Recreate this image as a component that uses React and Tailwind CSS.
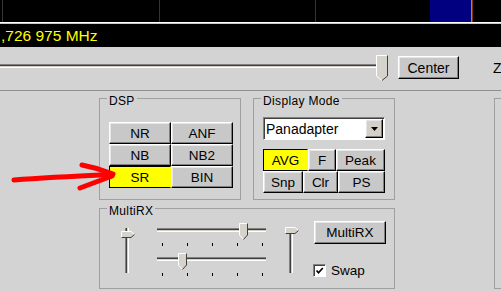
const raised =
  'bg-[#c8c8c8] border border-t-white border-l-white border-r-black border-b-black shadow-[inset_-1px_-1px_0_#808080,inset_1px_1px_0_#e6e6e6]'
const pressed = 'bg-[#ffff00] border border-black border-r-[#ffff00]'
const sunken =
  'border border-t-[#808080] border-l-[#808080] border-r-white border-b-white shadow-[inset_1px_1px_0_#404040]'

function Btn({ on, className = '', children }) {
  return (
    <div className={`flex items-center justify-center text-[13.5px] leading-[15px] ${on ? pressed : raised} ${className}`}>
      {children}
    </div>
  )
}

function GroupBox({ label, className = '', children }) {
  return (
    <div className={`relative shrink-0 border border-[#a0a0a0] ${className}`}>
      {label && (
        <span className="absolute left-[7px] top-[-5px] px-[2px] bg-[#d3d3d3] text-[12px] leading-[14px] tracking-[0.35px] whitespace-nowrap">
          {label}
        </span>
      )}
      {children}
    </div>
  )
}

// trackbar pieces (drawn)
function HTrack({ x, y, w }) {
  return (
    <g>
      <rect x={x} y={y} width={w} height="1" fill="#808080" />
      <rect x={x} y={y + 1} width={w} height="1" fill="#404040" />
      <rect x={x} y={y + 2} width={w} height="1" fill="#d4d0c8" />
      <rect x={x} y={y + 3} width={w} height="1" fill="#ffffff" />
    </g>
  )
}

function VTrack({ x, y, h }) {
  return (
    <g>
      <rect x={x} y={y} width="1" height={h} fill="#808080" />
      <rect x={x + 1} y={y} width="1" height={h} fill="#404040" />
      <rect x={x + 2} y={y} width="1" height={h} fill="#d4d0c8" />
      <rect x={x + 3} y={y} width="1" height={h} fill="#ffffff" />
    </g>
  )
}

function DownThumb({ x, y, w = 9, h = 17 }) {
  const m = x + w / 2
  const b = y + h - 5
  return (
    <g>
      <polygon points={`${x},${y} ${x + w},${y} ${x + w},${b} ${m},${y + h} ${x},${b}`} fill="#d6d3cc" />
      <polyline points={`${x + 0.5},${b} ${x + 0.5},${y + 0.5} ${x + w - 0.5},${y + 0.5}`} fill="none" stroke="#ffffff" />
      <polyline points={`${x + 0.5},${b} ${m},${y + h - 0.5}`} fill="none" stroke="#ffffff" />
      <polyline points={`${x + w - 0.5},${y + 0.5} ${x + w - 0.5},${b} ${m},${y + h - 0.5}`} fill="none" stroke="#404040" />
    </g>
  )
}

function RightThumb({ x, y }) {
  return (
    <g>
      <polygon points={`${x},${y} ${x + 10},${y} ${x + 14},${y + 3.5} ${x + 10},${y + 7} ${x},${y + 7}`} fill="#d6d3cc" />
      <polyline points={`${x + 0.5},${y + 7} ${x + 0.5},${y + 0.5} ${x + 10},${y + 0.5} ${x + 13.5},${y + 3.5}`} fill="none" stroke="#ffffff" />
      <polyline points={`${x + 0.5},${y + 6.5} ${x + 10},${y + 6.5} ${x + 13.5},${y + 3.5}`} fill="none" stroke="#404040" />
    </g>
  )
}

function Ticks({ y }) {
  return [7, 32, 57, 82, 107].map((x) => <rect key={x} x={x} y={y} width="1" height="3" fill="#000" />)
}

export default function App() {
  return (
    <div className="relative w-[501px] h-[291px] overflow-hidden bg-[#d3d3d3] text-black font-['Liberation_Sans',Arial,sans-serif]">
      {/* panadapter strip */}
      <svg width="501" height="22" className="block">
        <rect width="501" height="22" fill="#000" />
        <rect x="2" width="1" height="22" fill="#333" />
        <rect x="159" width="1" height="22" fill="#333" />
        <rect x="315" width="1" height="22" fill="#333" />
        <rect x="430" width="41" height="22" fill="#000080" />
        <rect x="471" width="1.5" height="22" fill="#ff6a00" />
      </svg>
      <div className="h-px bg-white" />
      <div className="h-px bg-[#c8c8c8]" />
      <div className="h-[23px] bg-black pl-[1px] text-[15.5px] leading-[23px] text-[#ffff00] whitespace-nowrap">,726 975 MHz</div>

      {/* zoom row */}
      <div className="flex items-start h-[43px]">
        <svg width="390" height="43" className="block shrink-0">
          <HTrack x={0} y={17} w={380} />
          <DownThumb x={376} y={8} w={12} h={26} />
        </svg>
        <div className={`shrink-0 ml-[8px] mt-[9px] w-[61px] h-[23px] flex items-center justify-center text-[14px] leading-[16px] ${raised}`}>
          Center
        </div>
        <span className="shrink-0 ml-[34px] mt-[13px] text-[14px] leading-[16px]">Z</span>
      </div>

      <div className="flex items-start border-t border-[#909090] pl-[99px] pt-[7px]">
        <div className="flex flex-col shrink-0">
          <div className="flex gap-[12px]">
            <GroupBox label="DSP" className="w-[142px] h-[102px] pl-[9px] pt-[23px]">
              <div className="grid grid-cols-[62px_62px] grid-rows-[22px_22px_22px]">
                <Btn>NR</Btn>
                <Btn>ANF</Btn>
                <Btn>NB</Btn>
                <Btn>NB2</Btn>
                <Btn on>SR</Btn>
                <Btn>BIN</Btn>
              </div>
            </GroupBox>

            <GroupBox label="Display Mode" className="w-[142px] h-[102px] pl-[9px] pt-[18px]">
              <div className={`w-[122px] h-[23px] flex items-center bg-white ${sunken}`}>
                <span className="flex-1 pl-[2px] text-[14px] leading-[16px]">Panadapter</span>
                <div className={`w-[18px] h-[19px] mr-[1px] flex items-center justify-center ${raised} bg-[#d4d0c8]`}>
                  <svg width="7" height="4" className="block">
                    <path d="M0 0H7L3.5 4Z" fill="#000" />
                  </svg>
                </div>
              </div>
              <div className="flex mt-[9px] h-[22px]">
                <Btn on className="w-[45px]">AVG</Btn>
                <Btn className="w-[28px]">F</Btn>
                <Btn className="w-[49px]">Peak</Btn>
              </div>
              <div className="flex h-[22px]">
                <Btn className="w-[40px]">Snp</Btn>
                <Btn className="w-[35px]">Clr</Btn>
                <Btn className="w-[47px]">PS</Btn>
              </div>
            </GroupBox>
          </div>

          <GroupBox label="MultiRX" className="mt-[8px] w-[296px] h-[81px]">
            <div className="flex items-start pl-[20px]">
              <svg width="17" height="48" className="block shrink-0 mt-[18px]">
                <VTrack x={5} y={1} h={45} />
                <RightThumb x={1} y={4} />
              </svg>
              <svg width="114" height="56" className="block shrink-0 ml-[18px] mt-[13px]">
                <HTrack x={2} y={6} w={109} />
                <DownThumb x={84} y={1} />
                <Ticks y={21} />
                <HTrack x={2} y={35} w={109} />
                <DownThumb x={23} y={31} />
                <Ticks y={51} />
              </svg>
              <svg width="17" height="49" className="block shrink-0 ml-[15px] mt-[17px]">
                <VTrack x={5} y={6} h={41} />
                <RightThumb x={1} y={1} />
              </svg>
              <div className="flex flex-col shrink-0 ml-[13px] mt-[12px]">
                <div className={`w-[72px] h-[23px] flex items-center justify-center text-[13.5px] leading-[15px] ${raised}`}>
                  MultiRX
                </div>
                <label className="flex items-center mt-[19px] -ml-px">
                  <div className={`w-[13px] h-[13px] bg-white ${sunken}`}>
                    <svg width="11" height="11" className="block">
                      <path d="M2.5 5.5L4.5 7.8L8.8 3" fill="none" stroke="#000" strokeWidth="1.7" />
                    </svg>
                  </div>
                  <span className="ml-[5px] text-[13.5px] leading-[15px]">Swap</span>
                </label>
              </div>
            </div>
          </GroupBox>
        </div>

        <GroupBox className="ml-[99px] w-[60px] h-[191px]" />
      </div>

      {/* red annotation arrow */}
      <svg width="125" height="40" className="absolute left-0 top-[155px] pointer-events-none">
        <g fill="none" stroke="#ff0000" strokeWidth="5" strokeLinecap="round" strokeLinejoin="round">
          <path d="M14 25C40 23 78 21 110 19.5" />
          <path d="M82 10Q98 13 113 19" />
          <path d="M112 21Q96 27 80 33" />
        </g>
      </svg>
    </div>
  )
}
